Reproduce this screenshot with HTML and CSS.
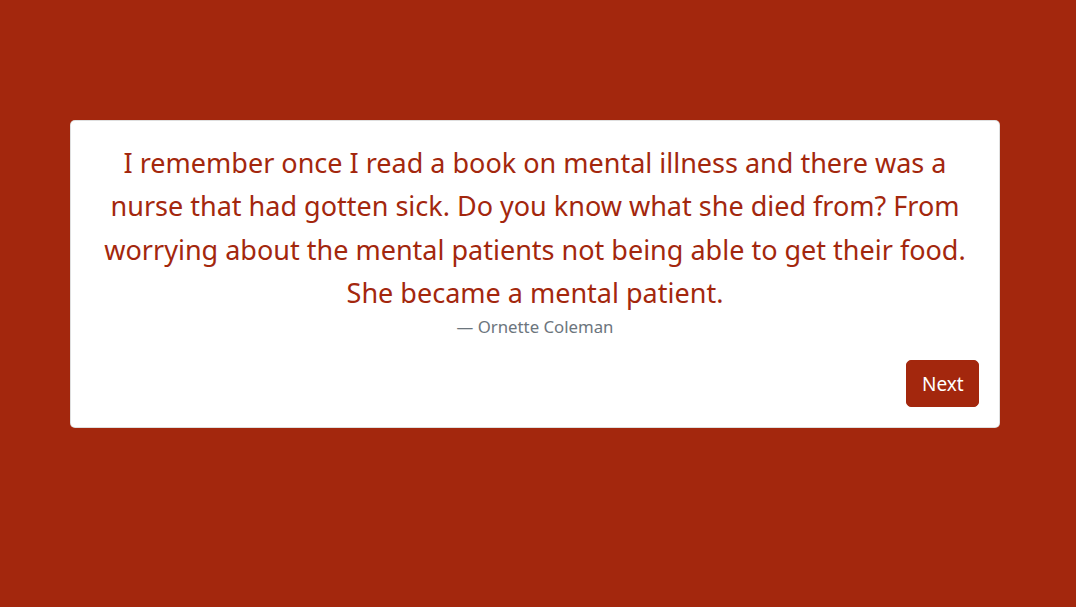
FILE: index.html
```html
<!DOCTYPE html>
<html lang="en">
<head>
<meta charset="utf-8">
<title>Random Quote</title>
<link rel="stylesheet" href="styles.css">
</head>
<body>
<main class="page">
  <div class="card" id="quote-box">
    <blockquote class="quote">
      <p class="quote-text" id="text">I remember once I read a book on mental illness and there was a nurse that had gotten sick. Do you know what she died from? From worrying about the mental patients not being able to get their food. She became a mental patient.</p>
      <footer class="quote-author" id="author">— Ornette Coleman</footer>
    </blockquote>
    <div class="actions">
      <button class="btn-next" id="new-quote">Next</button>
    </div>
  </div>
</main>
</body>
</html>
```
FILE: styles.css
```css
html, body {
  margin: 0;
  padding: 0;
  height: 100%;
}
body {
  background: #a3270d;
  font-family: "Noto Sans", "Open Sans", sans-serif;
  color: #a3270d;
}
.page {
  padding: 120px 77px 0 70px;
}
.card {
  background: #fff;
  border: 1px solid rgba(0, 0, 0, 0.125);
  border-radius: 5px;
  padding: 20px 20px 20px 20px;
  box-sizing: border-box;
  width: 930px;
}
.quote {
  margin: 0;
  text-align: center;
}
.quote-text {
  margin: 0;
  font-size: 27px;
  line-height: 43.3px;
}
.quote-author {
  font-size: 16.8px;
  line-height: 26px;
  color: #6c757d;
}
.actions {
  display: flex;
  justify-content: flex-end;
  margin-top: 20px;
}
.btn-next {
  font-family: inherit;
  background: #a3270d;
  color: #fff;
  border: 1px solid #a3270d;
  border-radius: 5px;
  font-size: 19px;
  line-height: 30px;
  padding: 7px 15px;
  width: 73px;
  height: 47px;
  cursor: pointer;
}
```
